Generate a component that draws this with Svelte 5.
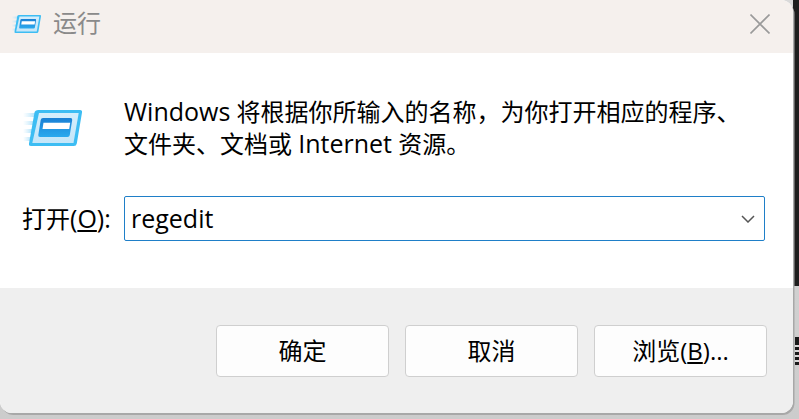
<script lang="ts">
  let command = $state('regedit');
</script>

<div class="desktop">
  <div class="strip"></div>
  <div class="sliver"><i></i><i></i><i></i><i></i></div>
  <div class="dialog">
    <header class="titlebar">
      <svg class="title-icon" viewBox="0 0 62 40" width="31" height="20" aria-hidden="true">
        <use href="#run-icon" />
      </svg>
      <span class="title">运行</span>
      <button class="close" aria-label="关闭">
        <svg viewBox="0 0 20 20" width="20" height="20">
          <path d="M0.5 0.5 L19.5 19.5 M19.5 0.5 L0.5 19.5" />
        </svg>
      </button>
    </header>

    <section class="body">
      <div class="intro">
        <svg class="big-icon" viewBox="0 0 62 40" width="62" height="40" aria-hidden="true">
          <defs>
            <linearGradient id="panel" x1="0" y1="0" x2="0" y2="1">
              <stop offset="0" stop-color="#d4eefc" />
              <stop offset="1" stop-color="#c4e6f9" />
            </linearGradient>
            <linearGradient id="slot" x1="0" y1="0" x2="0" y2="1">
              <stop offset="0" stop-color="#1a80d4" />
              <stop offset="1" stop-color="#2aa9ee" />
            </linearGradient>
            <linearGradient id="trail" x1="0" y1="0" x2="1" y2="0">
              <stop offset="0" stop-color="#c4e8fb" stop-opacity="0" />
              <stop offset="1" stop-color="#a9dff9" />
            </linearGradient>
            <g id="run-icon">
              <g fill="url(#trail)">
                <rect x="1" y="5" width="13" height="4" />
                <rect x="1" y="13" width="12" height="4" />
                <rect x="1" y="21" width="10" height="4" />
                <rect x="1" y="29" width="9" height="4" />
              </g>
              <path d="M16.500 2 H58 Q60.500 2 60 4.500 L54.800 35.500 Q54.300 38 51.800 38 H9 Q6.500 38 7 35.500 L12.500 4.500 Q13 2 16.500 2 Z" fill="#3dbdf3" />
              <path d="M17 5 H56.700 L51.500 35 H10.300 Z" fill="url(#panel)" />
              <path d="M21 10 H48.500 Q50.500 10 50.200 12 L47.800 27 Q47.500 29 45.500 29 H18 Q16 29 16.300 27 L18.700 12 Q19 10 21 10 Z" fill="url(#slot)" />
              <path d="M21.500 14.700 H48.200 L47.200 21 H20.500 Z" fill="#ffffff" />
            </g>
          </defs>
          <use href="#run-icon" />
        </svg>
        <p class="message"><span class="latin">Windows</span> 将根据你所输入的名称，为你打开相应的程序、<br />文件夹、文档或 <span class="latin">Internet</span> 资源。</p>
      </div>

      <div class="open-row">
        <label for="cmd">打开<span class="latin">(<u>O</u>):</span></label>
        <div class="combo">
          <input id="cmd" bind:value={command} spellcheck="false" />
          <svg viewBox="0 0 14 8" width="14" height="8" aria-hidden="true">
            <path d="M1 1 L7 7 L13 1" />
          </svg>
        </div>
      </div>
    </section>

    <footer class="actions">
      <button class="btn">确定</button>
      <button class="btn">取消</button>
      <button class="btn">浏览(<u>B</u>)...</button>
    </footer>
  </div>
</div>

<style>
  :global(body) {
    margin: 0;
    background: #cfcfcf;
  }
  .desktop {
    position: relative;
    width: 799px;
    height: 419px;
    overflow: hidden;
    background: linear-gradient(#d9d9d9, #cccccc);
    font-family: "Open Sans", "Noto Sans CJK SC", sans-serif;
    color: #000;
  }
  /* sliver of the dark window behind the dialog */
  .strip {
    position: absolute;
    top: 0;
    right: 0;
    width: 6px;
    height: 286px;
    background: #1e1e1e;
  }
  .sliver {
    position: absolute;
    top: 337px;
    right: 0;
    width: 4px;
    height: 28px;
    padding-top: 8px;
    box-sizing: border-box;
    display: flex;
    flex-direction: column;
    gap: 3px;
    background: #1a1a1a;
  }
  .sliver i {
    height: 2px;
    background: #d8d8d8;
  }
  .dialog {
    position: relative;
    width: 793px;
    height: 413px;
    display: flex;
    flex-direction: column;
    background: #fff;
    border-radius: 0 12px 12px 12px;
    box-shadow: 1.5px 2px 0 #a8a8a8;
    overflow: hidden;
  }
  .titlebar {
    height: 53px;
    flex: none;
    display: flex;
    align-items: flex-start;
    padding: 0 23px 0 11px;
    background: #f5f0ed;
  }
  .title-icon {
    margin-top: 14px;
  }
  .title {
    margin-left: 11px;
    font-size: 24px;
    line-height: 46px;
    color: #8a8a8a;
  }
  .close {
    margin-left: auto;
    margin-top: 14px;
    padding: 0;
    border: 0;
    background: none;
    display: flex;
  }
  .close path {
    fill: none;
    stroke: #9a9a9a;
    stroke-width: 1.6;
  }
  .body {
    flex: 1;
    min-height: 0;
    padding: 0 28px 0 22px;
    background: #fff;
  }
  .intro {
    display: flex;
    align-items: flex-start;
    padding-top: 43px;
  }
  .big-icon {
    flex: none;
    margin-top: 12px;
  }
  .message {
    margin: 0 0 0 40px;
    font-size: 24px;
    line-height: 32px;
    height: 64px;
    white-space: nowrap;
  }
  .latin {
    font-size: 25px;
    line-height: 1;
  }
  .open-row {
    display: flex;
    align-items: center;
    margin-top: 36px;
  }
  label {
    font-size: 24px;
    line-height: 34px;
    width: 102px;
    flex: none;
    white-space: nowrap;
  }
  .combo {
    flex: 1;
    height: 45px;
    box-sizing: border-box;
    display: flex;
    align-items: center;
    padding: 0 9px 0 6px;
    border: 1.5px solid #1f7fc8;
    border-radius: 2px;
  }
  .combo input {
    flex: 1;
    min-width: 0;
    border: 0;
    outline: 0;
    padding: 0 0 2px;
    font: inherit;
    font-size: 25px;
    color: #000;
    background: none;
  }
  .combo path {
    fill: none;
    stroke: #555;
    stroke-width: 1.5;
  }
  .actions {
    height: 125px;
    flex: none;
    box-sizing: border-box;
    display: flex;
    justify-content: flex-end;
    gap: 16px;
    padding: 37px 26px 0 0;
    background: #efefef;
  }
  .btn {
    width: 173px;
    height: 52px;
    box-sizing: border-box;
    border: 1px solid #cfcfcf;
    border-radius: 4px;
    background: #fdfdfd;
    font: inherit;
    font-size: 24px;
    color: #000;
    padding: 0 0 3px;
  }
</style>
